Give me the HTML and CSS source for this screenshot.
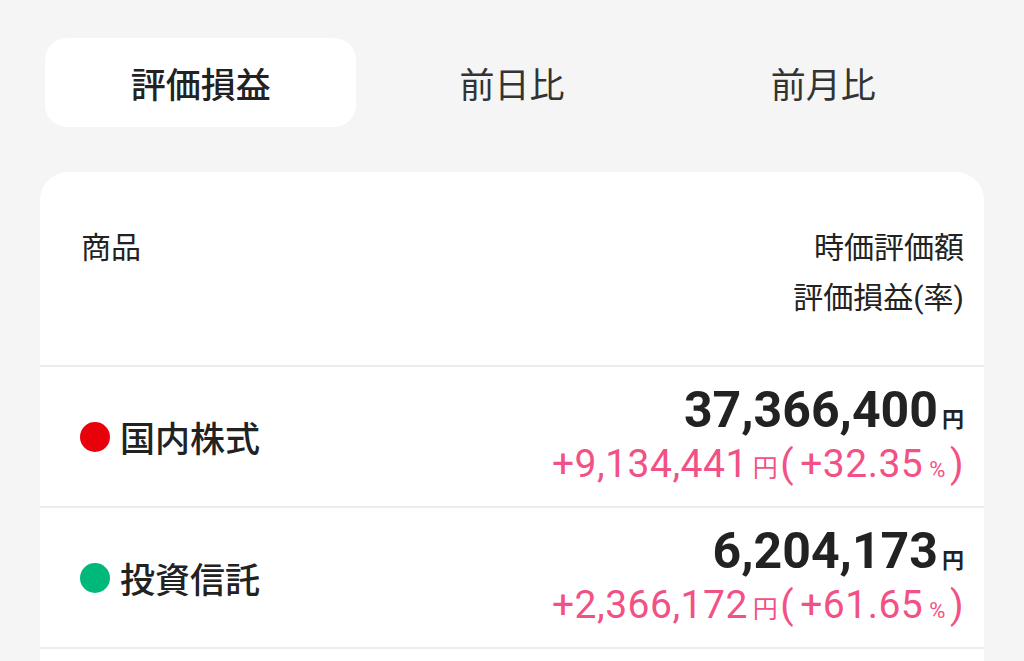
FILE: index.html
```html
<!DOCTYPE html>
<html lang="ja">
<head>
    <meta charset="UTF-8">
    <meta name="viewport" content="width=device-width, initial-scale=1.0">
    <title>資産</title>
    <link rel="stylesheet" href="styles.css">
</head>
<body>
    <div class="tabs">
        <div class="tab active">評価損益</div>
        <div class="tab">前日比</div>
        <div class="tab">前月比</div>
    </div>

    <div class="card">
        <div class="card-head">
            <div class="head-left">商品</div>
            <div class="head-right">
                <div>時価評価額</div>
                <div>評価損益(率)</div>
            </div>
        </div>

        <div class="row">
            <div class="name"><span class="dot red"></span>国内株式</div>
            <div class="values">
                <div class="amount">37,366,400<span class="yen">円</span></div>
                <div class="gain">+9,134,441<span class="yen">円</span><span class="paren">(</span>+32.35<span class="pct">%</span>)</div>
            </div>
        </div>

        <div class="row">
            <div class="name"><span class="dot green"></span>投資信託</div>
            <div class="values">
                <div class="amount">6,204,173<span class="yen">円</span></div>
                <div class="gain">+2,366,172<span class="yen">円</span><span class="paren">(</span>+61.65<span class="pct">%</span>)</div>
            </div>
        </div>

        <div class="row"></div>
    </div>
</body>
</html>
```

FILE: styles.css
```css
body {
    margin: 0;
    background: #f5f5f5;
    font-family: Roboto, "Noto Sans CJK JP", sans-serif;
    color: #222;
}
.tabs {
    display: grid;
    grid-template-columns: repeat(3, 1fr);
    margin: 38px 45px 0 45px;
}
.tab {
    height: 89px;
    display: flex;
    align-items: center;
    justify-content: center;
    font-size: 35px;
    color: #333;
    border-radius: 22px;
}
.tab.active {
    background: #fff;
    font-weight: 500;
    color: #222;
}
.card {
    margin: 45px 40px 0 40px;
    background: #fff;
    border-radius: 28px 28px 0 0;
}
.card-head {
    display: flex;
    justify-content: space-between;
    padding: 51px 20px 42px 41px;
    font-size: 30px;
    line-height: 50px;
}
.head-right {
    text-align: right;
}
.row {
    display: flex;
    justify-content: space-between;
    align-items: center;
    height: 139px;
    padding: 0 20px 0 40px;
    border-top: 2px solid #ececec;
}
.name {
    display: flex;
    align-items: center;
    font-size: 35px;
    font-weight: 500;
}
.dot {
    width: 30px;
    height: 30px;
    border-radius: 50%;
    margin-right: 10px;
}
.dot.red {
    background: #e8000b;
}
.dot.green {
    background: #00b87a;
}
.values {
    text-align: right;
    padding-bottom: 6px;
}
.amount {
    font-size: 50px;
    font-weight: 700;
    line-height: 60px;
}
.amount .yen {
    font-size: 22px;
    line-height: 1;
    margin-left: 4px;
}
.gain {
    font-size: 39px;
    line-height: 48px;
    letter-spacing: 0.5px;
    color: #f25185;
}
.gain .yen {
    font-size: 25px;
    line-height: 1;
    margin: 0 2px 0 5px;
}
.paren {
    margin-right: 6px;
}
.pct {
    font-size: 22px;
    line-height: 1;
    margin: 0 4px 0 6px;
}
```
